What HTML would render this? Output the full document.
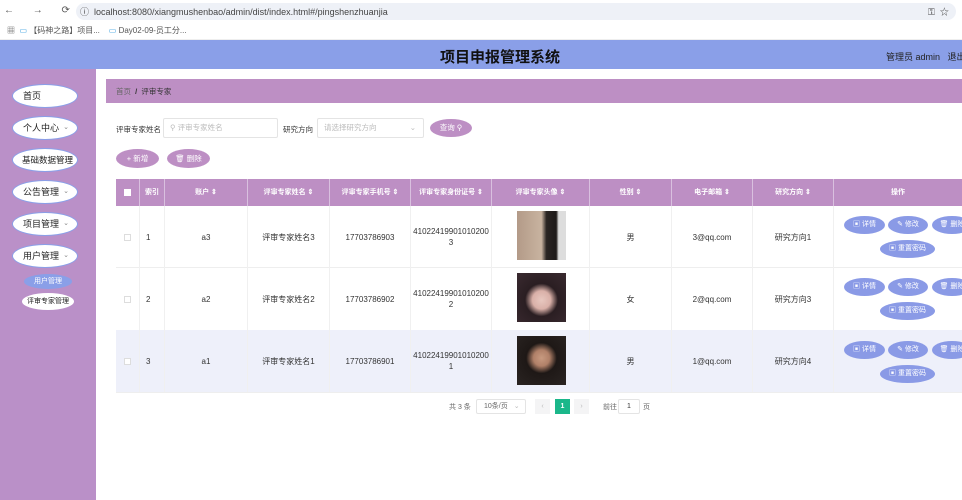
<!DOCTYPE html>
<html><head><meta charset="utf-8"><style>
*{margin:0;padding:0;box-sizing:border-box}
body{width:962px;height:500px;overflow:hidden;font-family:"Liberation Sans","Noto Sans CJK SC",sans-serif;background:#fff;position:relative;font-size:8px;color:#333}
.abs{position:absolute;white-space:nowrap}
.side{left:0;top:69px;width:96px;height:431px;background:#ba90c8}
.nav{position:absolute;left:12px;width:66px;height:24px;border-radius:50%;background:#fff;border:1px solid #8a9fe8;font-size:9px;line-height:22px;padding-left:10px;color:#222;white-space:nowrap}
.nav i{position:absolute;right:8px;top:0;font-style:normal;font-size:7px;color:#888}
.th{position:absolute;top:179px;height:27px;background:#bd8fc4;color:#fff;font-size:7px;font-weight:bold;line-height:27px;text-align:center;border-right:1px solid #d9c0df;white-space:nowrap}
.td{position:absolute;text-align:center;font-size:8px;line-height:11px;display:flex;align-items:center;justify-content:center;border-right:1px solid #f0f0f0}
.btn{position:absolute;height:18px;border-radius:50%;background:#8a9ae6;color:#fff;font-size:7px;line-height:18px;text-align:center;white-space:nowrap}
.img{position:absolute;width:49px;height:49px;left:517px}
</style></head><body>
<div class="abs" style="left:0;top:0;width:962px;height:22px;background:#fff"></div>
<div class="abs" style="left:4px;top:5px;font-size:10px;color:#555;letter-spacing:8px">← → ⟳ ⌂</div>
<div class="abs" style="left:76px;top:3px;width:880px;height:17px;border-radius:9px;background:#eef1f7"></div>
<div class="abs" style="left:80px;top:5px;font-size:9px;color:#444">ⓘ &nbsp;localhost:8080/xiangmushenbao/admin/dist/index.html#/pingshenzhuanjia</div>
<div class="abs" style="left:928px;top:5px;font-size:9px;color:#444">⚿ &nbsp;☆</div>
<div class="abs" style="left:0;top:22px;width:962px;height:18px;background:#fff;border-bottom:1px solid #eee"></div>
<div class="abs" style="left:7px;top:25px;font-size:8px;color:#555">▦ &nbsp;<span style="color:#3aa0e0">▭</span> 【码神之路】项目... &nbsp;&nbsp;&nbsp;<span style="color:#3aa0e0">▭</span> Day02-09-员工分...</div>
<div class="abs" style="left:0;top:40px;width:962px;height:29px;background:#8a9fe8"></div>
<div class="abs" style="left:0;top:46px;width:1000px;text-align:center;font-size:15px;font-weight:bold;color:#111">项目申报管理系统</div>
<div class="abs" style="left:886px;top:50px;font-size:9px;color:#222">管理员 admin &nbsp;&nbsp;退出</div>
<div class="abs side"></div>
<div class="nav" style="top:84px">首页</div>
<div class="nav" style="top:116px">个人中心<i>⌄</i></div>
<div class="nav" style="top:148px;padding-left:9px;font-size:8.5px">基础数据管理</div>
<div class="nav" style="top:180px">公告管理<i>⌄</i></div>
<div class="nav" style="top:212px">项目管理<i>⌄</i></div>
<div class="nav" style="top:244px">用户管理<i>⌄</i></div>
<div class="abs" style="left:24px;top:274px;width:48px;height:15px;border-radius:50%;background:#8a9fe8;color:#fff;font-size:7px;line-height:15px;text-align:center">用户管理</div>
<div class="abs" style="left:22px;top:293px;width:52px;height:17px;border-radius:50%;background:#fff;color:#222;font-size:7px;line-height:17px;text-align:center">评审专家管理</div>
<div class="abs" style="left:106px;top:79px;width:856px;height:24px;background:#bd8fc4"></div>
<div class="abs" style="left:116px;top:86px;font-size:7.5px;color:#333"><span style="color:#666">首页</span> &nbsp;<b>/</b>&nbsp; 评审专家</div>
<div class="abs" style="left:116px;top:124px;font-size:7.5px">评审专家姓名</div>
<div class="abs" style="left:163px;top:118px;width:115px;height:20px;border:1px solid #e4e4e4;border-radius:2px;font-size:7.5px;color:#bbb;line-height:18px;padding-left:6px">⚲ 评审专家姓名</div>
<div class="abs" style="left:283px;top:124px;font-size:7.5px">研究方向</div>
<div class="abs" style="left:317px;top:118px;width:107px;height:20px;border:1px solid #e4e4e4;border-radius:2px;font-size:7.5px;color:#bbb;line-height:18px;padding-left:6px">请选择研究方向<span style="position:absolute;right:7px">⌄</span></div>
<div class="abs" style="left:430px;top:119px;width:42px;height:18px;border-radius:50%;background:#bd8fc4;color:#fff;font-size:7.5px;line-height:18px;text-align:center">查询 ⚲</div>
<div class="abs" style="left:116px;top:149px;width:43px;height:19px;border-radius:50%;background:#bd8fc4;color:#fff;font-size:7.5px;line-height:19px;text-align:center">+ 新增</div>
<div class="abs" style="left:167px;top:149px;width:43px;height:19px;border-radius:50%;background:#bd8fc4;color:#fff;font-size:7.5px;line-height:19px;text-align:center">🗑 删除</div>
<div class="th" style="left:116px;width:24px"><span style="display:inline-block;width:7px;height:7px;background:#fff;vertical-align:middle"></span></div>
<div class="th" style="left:140px;width:25px">索引</div>
<div class="th" style="left:165px;width:83px">账户 ⇕</div>
<div class="th" style="left:248px;width:82px">评审专家姓名 ⇕</div>
<div class="th" style="left:330px;width:81px">评审专家手机号 ⇕</div>
<div class="th" style="left:411px;width:81px">评审专家身份证号 ⇕</div>
<div class="th" style="left:492px;width:98px">评审专家头像 ⇕</div>
<div class="th" style="left:590px;width:82px">性别 ⇕</div>
<div class="th" style="left:672px;width:81px">电子邮箱 ⇕</div>
<div class="th" style="left:753px;width:81px">研究方向 ⇕</div>
<div class="th" style="left:834px;width:128px;border-right:0">操作</div>
<div class="abs" style="left:116px;top:267px;width:846px;height:1px;background:#eee"></div>
<div class="abs" style="left:116px;top:330px;width:846px;height:63px;background:#eef0fa"></div>
<div class="abs" style="left:116px;top:392px;width:846px;height:1px;background:#eee"></div>
<div class="td" style="left:116px;top:206px;width:24px;height:62px"><span style="width:7px;height:7px;border:1px solid #ddd"></span></div>
<div class="td" style="left:140px;top:206px;width:25px;height:62px;justify-content:flex-start;padding-left:6px">1</div>
<div class="td" style="left:165px;top:206px;width:83px;height:62px">a3</div>
<div class="td" style="left:248px;top:206px;width:82px;height:62px">评审专家姓名3</div>
<div class="td" style="left:330px;top:206px;width:81px;height:62px">17703786903</div>
<div class="td" style="left:411px;top:206px;width:81px;height:62px">41022419901010200<br>3</div>
<div class="td" style="left:492px;top:206px;width:98px;height:62px"></div>
<div class="img" style="top:211px;background:linear-gradient(90deg,#b39a88 0,#c8b3a0 50%,#2a2523 60%,#1e1a19 80%,#ddd 85%)"></div>
<div class="td" style="left:590px;top:206px;width:82px;height:62px">男</div>
<div class="td" style="left:672px;top:206px;width:81px;height:62px">3@qq.com</div>
<div class="td" style="left:753px;top:206px;width:81px;height:62px">研究方向1</div>
<div class="td" style="left:116px;top:268px;width:24px;height:62px"><span style="width:7px;height:7px;border:1px solid #ddd"></span></div>
<div class="td" style="left:140px;top:268px;width:25px;height:62px;justify-content:flex-start;padding-left:6px">2</div>
<div class="td" style="left:165px;top:268px;width:83px;height:62px">a2</div>
<div class="td" style="left:248px;top:268px;width:82px;height:62px">评审专家姓名2</div>
<div class="td" style="left:330px;top:268px;width:81px;height:62px">17703786902</div>
<div class="td" style="left:411px;top:268px;width:81px;height:62px">41022419901010200<br>2</div>
<div class="td" style="left:492px;top:268px;width:98px;height:62px"></div>
<div class="img" style="top:273px;background:radial-gradient(circle at 50% 55%,#e8c8c0 0,#d9b0a8 25%,#2a1e22 45%,#3a2a30 100%)"></div>
<div class="td" style="left:590px;top:268px;width:82px;height:62px">女</div>
<div class="td" style="left:672px;top:268px;width:81px;height:62px">2@qq.com</div>
<div class="td" style="left:753px;top:268px;width:81px;height:62px">研究方向3</div>
<div class="td" style="left:116px;top:330px;width:24px;height:62px"><span style="width:7px;height:7px;border:1px solid #ddd;background:#fff"></span></div>
<div class="td" style="left:140px;top:330px;width:25px;height:62px;justify-content:flex-start;padding-left:6px">3</div>
<div class="td" style="left:165px;top:330px;width:83px;height:62px">a1</div>
<div class="td" style="left:248px;top:330px;width:82px;height:62px">评审专家姓名1</div>
<div class="td" style="left:330px;top:330px;width:81px;height:62px">17703786901</div>
<div class="td" style="left:411px;top:330px;width:81px;height:62px">41022419901010200<br>1</div>
<div class="td" style="left:492px;top:330px;width:98px;height:62px"></div>
<div class="img" style="top:336px;background:radial-gradient(circle at 50% 45%,#c89a80 0,#b08068 22%,#1e1816 42%,#2a2422 100%)"></div>
<div class="td" style="left:590px;top:330px;width:82px;height:62px">男</div>
<div class="td" style="left:672px;top:330px;width:81px;height:62px">1@qq.com</div>
<div class="td" style="left:753px;top:330px;width:81px;height:62px">研究方向4</div>
<div class="btn" style="left:844px;top:216px;width:41px">▣ 详情</div>
<div class="btn" style="left:888px;top:216px;width:40px">✎ 修改</div>
<div class="btn" style="left:932px;top:216px;width:40px">🗑 删除</div>
<div class="btn" style="left:880px;top:240px;width:55px">▣ 重置密码</div>
<div class="btn" style="left:844px;top:278px;width:41px">▣ 详情</div>
<div class="btn" style="left:888px;top:278px;width:40px">✎ 修改</div>
<div class="btn" style="left:932px;top:278px;width:40px">🗑 删除</div>
<div class="btn" style="left:880px;top:302px;width:55px">▣ 重置密码</div>
<div class="btn" style="left:844px;top:341px;width:41px">▣ 详情</div>
<div class="btn" style="left:888px;top:341px;width:40px">✎ 修改</div>
<div class="btn" style="left:932px;top:341px;width:40px">🗑 删除</div>
<div class="btn" style="left:880px;top:365px;width:55px">▣ 重置密码</div>
<div class="abs" style="left:449px;top:402px;font-size:7px;color:#666">共 3 条</div>
<div class="abs" style="left:476px;top:399px;width:50px;height:15px;border:1px solid #e4e4e4;border-radius:2px;font-size:7px;color:#666;line-height:13px;padding-left:7px">10条/页 <span style="color:#bbb;margin-left:4px">⌄</span></div>
<div class="abs" style="left:535px;top:399px;width:15px;height:15px;background:#f4f4f5;color:#bbb;font-size:7px;line-height:15px;text-align:center">‹</div>
<div class="abs" style="left:555px;top:399px;width:15px;height:15px;background:#1bb78a;color:#fff;font-size:7px;font-weight:bold;line-height:15px;text-align:center">1</div>
<div class="abs" style="left:574px;top:399px;width:15px;height:15px;background:#f4f4f5;color:#bbb;font-size:7px;line-height:15px;text-align:center">›</div>
<div class="abs" style="left:603px;top:402px;font-size:7px;color:#666">前往</div>
<div class="abs" style="left:618px;top:399px;width:22px;height:15px;border:1px solid #e4e4e4;border-radius:2px;font-size:7px;line-height:13px;text-align:center">1</div>
<div class="abs" style="left:643px;top:402px;font-size:7px;color:#666">页</div>
</body></html>
